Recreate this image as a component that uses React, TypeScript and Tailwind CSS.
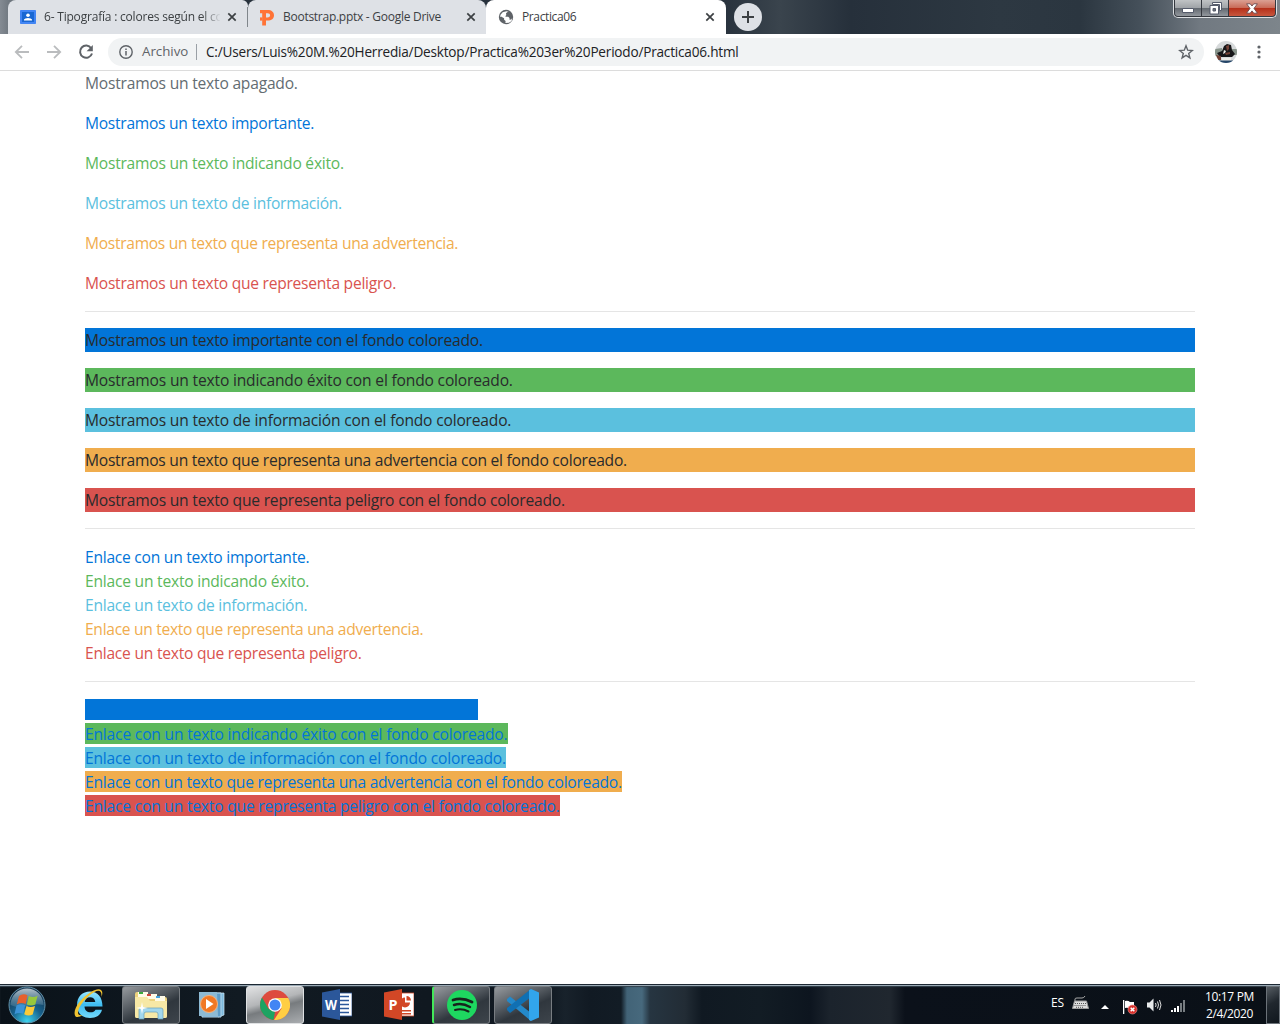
import type { ReactNode } from 'react';

const UI = "font-['Open_Sans','Noto_Sans',sans-serif]";

const paragraphs = [
  { text: 'Mostramos un texto apagado.', style: 'text-[#636c72] tracking-[-0.21px]' },
  { text: 'Mostramos un texto importante.', style: 'text-[#0275d8] tracking-[-0.27px]' },
  { text: 'Mostramos un texto indicando éxito.', style: 'text-[#5cb85c] tracking-[-0.23px]' },
  { text: 'Mostramos un texto de información.', style: 'text-[#5bc0de] tracking-[-0.26px]' },
  { text: 'Mostramos un texto que representa una advertencia.', style: 'text-[#f0ad4e] tracking-[-0.3px]' },
  { text: 'Mostramos un texto que representa peligro.', style: 'text-[#d9534f] tracking-[-0.25px]' },
];

const filled = [
  { text: 'Mostramos un texto importante con el fondo coloreado.', style: 'bg-[#0275d8] tracking-[-0.2px]' },
  { text: 'Mostramos un texto indicando éxito con el fondo coloreado.', style: 'bg-[#5cb85c] tracking-[-0.18px]' },
  { text: 'Mostramos un texto de información con el fondo coloreado.', style: 'bg-[#5bc0de] tracking-[-0.19px]' },
  { text: 'Mostramos un texto que representa una advertencia con el fondo coloreado.', style: 'bg-[#f0ad4e] tracking-[-0.24px]' },
  { text: 'Mostramos un texto que representa peligro con el fondo coloreado.', style: 'bg-[#d9534f] tracking-[-0.2px]' },
];

const links = [
  { text: 'Enlace con un texto importante.', style: 'text-[#0275d8] tracking-[-0.25px]' },
  { text: 'Enlace un texto indicando éxito.', style: 'text-[#5cb85c] tracking-[-0.22px]' },
  { text: 'Enlace un texto de información.', style: 'text-[#5bc0de] tracking-[-0.25px]' },
  { text: 'Enlace un texto que representa una advertencia.', style: 'text-[#f0ad4e] tracking-[-0.3px]' },
  { text: 'Enlace un texto que representa peligro.', style: 'text-[#d9534f] tracking-[-0.24px]' },
];

const filledLinks = [
  { text: 'Enlace con un texto importante con el fondo coloreado.', style: 'bg-[#0275d8] w-[393px] tracking-[-0.2px]' },
  { text: 'Enlace con un texto indicando éxito con el fondo coloreado.', style: 'bg-[#5cb85c] w-[423px] tracking-[-0.18px]' },
  { text: 'Enlace con un texto de información con el fondo coloreado.', style: 'bg-[#5bc0de] w-[421px] tracking-[-0.19px]' },
  { text: 'Enlace con un texto que representa una advertencia con el fondo coloreado.', style: 'bg-[#f0ad4e] w-[537px] tracking-[-0.235px]' },
  { text: 'Enlace con un texto que representa peligro con el fondo coloreado.', style: 'bg-[#d9534f] w-[475px] tracking-[-0.2px]' },
];

function CloseX() {
  return (
    <svg width="10" height="10" viewBox="0 0 10 10" className="shrink-0">
      <path d="M1.3 1.3l7.4 7.4M8.7 1.3L1.3 8.7" stroke="#3c4043" strokeWidth="1.7" />
    </svg>
  );
}

function TabStrip() {
  return (
    <div className="flex h-[34px] items-start bg-[linear-gradient(90deg,#848b93_0px,#6e767e_10px,#27313c_240px,#27313c_720px,#3a444d_780px,#26303b_850px,#2d3842_1000px,#2b3640_1080px,#45505a_1140px,#717981_1200px,#7d858b_1280px)] text-[12px] text-[#3c4043]">
      <div className="ml-2 flex h-[34px] w-[240px] items-center rounded-tl-lg rounded-tr-md bg-[#dee1e6] pl-3">
        <svg width="16" height="16" viewBox="0 0 16 16" className="shrink-0">
          <path fill="#4285f4" d="M0 1.5Q0 1 .8 1h14.4q.8 0 .8.5v12.700q0 .8-.8.8H.8q-.8 0-.8-.8z" />
          <path fill="#1967d2" d="M2 3h12v10H2z" />
          <circle cx="8" cy="6.300" r="1.800" fill="#fff" />
          <path fill="#fff" d="M4 11.500V10.600Q4.800 8.900 8 8.900t4 1.700v.9z" />
        </svg>
        <span className="ml-2 w-[176px] overflow-hidden whitespace-nowrap tracking-[-0.2px] [mask-image:linear-gradient(90deg,#000_158px,transparent_177px)]">
          6- Tipografía : colores según el co
        </span>
        <span className="ml-[7px] flex"><CloseX /></span>
      </div>
      <div className="flex h-[34px] w-[238px] items-center rounded-t-lg bg-[#dee1e6]">
        <span className="-ml-px h-5 w-px shrink-0 bg-[#80868b]" />
        <svg width="14" height="17" viewBox="0 0 14 17" className="ml-3 shrink-0">
          <path fill="#ff7336" fillRule="evenodd" d="M0 1h7.600C11.600 1 14 3 14 6.300s-2.500 5.300-6.400 5.300H6V16.500H2.200V4.200H0zM6 4.200v4.200h1.500c1.700 0 2.600-.7 2.600-2.100s-.9-2.100-2.600-2.100z" />
          <path fill="#ff7336" d="M0 8.400h2.500v3.200H0z" />
        </svg>
        <span className="ml-[9px] w-[183px] whitespace-nowrap tracking-[-0.27px]">Bootstrap.pptx - Google Drive</span>
        <CloseX />
      </div>
      <div className="flex h-[34px] w-[240px] items-center rounded-t-lg bg-white pl-3">
        <svg width="16" height="16" viewBox="0 0 16 16" className="shrink-0">
          <circle cx="8" cy="8" r="7.200" fill="#5f6368" />
          <path fill="#fff" d="M8.500 2.200l2.200.6-1 1.200v1.400L7.800 6.500l-.4 1.300h2.800l1.300 1.300v1.600l1.700-.1 1-1.700-.6 3-2.600 1.800-3.600.4.200-2.200-1.500-1.200V9.200L3 7.600l-1.100.3.8-2.500 2-2.200z" />
          <path fill="#5f6368" d="M8 4.300l2.500-2 3 2.200.8 2.700-2.200 1.100-1.200-1.200-2.500-.3z" />
        </svg>
        <span className="ml-2 w-[183px] whitespace-nowrap tracking-[-0.38px]">Practica06</span>
        <CloseX />
      </div>
      <div className="ml-2 mt-[3px] flex h-7 w-7 items-center justify-center rounded-full bg-[#dee1e6]">
        <svg width="12" height="12" viewBox="0 0 12 12"><path d="M6 0v12M0 6h12" stroke="#3c4043" strokeWidth="2" /></svg>
      </div>
      <div className="ml-auto mr-[3px] flex h-[18px] w-[104px] overflow-hidden rounded-b-[5px] border border-t-0 border-[#dde0e3] bg-[#34383f] p-px pt-0">
        <div className="flex flex-1 items-center justify-center rounded-bl-[3px] bg-[linear-gradient(#c0c3c5_0%,#a0a4a8_48%,#646a71_52%,#92979d_100%)]">
          <svg width="12" height="5" viewBox="0 0 12 5" className="mt-1"><path d="M.5.5h11v4H.5z" fill="#fff" stroke="#555b6b" /></svg>
        </div>
        <div className="ml-px flex w-[26px] items-center justify-center bg-[linear-gradient(#c0c3c5_0%,#a0a4a8_48%,#646a71_52%,#92979d_100%)]">
          <svg width="13" height="13" viewBox="0 0 13 13">
            <path d="M3.500.5h9v8h-2v-6h-7z" fill="#fff" stroke="#555b6b" />
            <path fillRule="evenodd" d="M1 3.500h8.500v8.500H1zM4 6.500v2.500h2.500V6.500z" fill="#fff" stroke="#555b6b" />
          </svg>
        </div>
        <div className="ml-px flex w-[46px] items-center justify-center rounded-br-[3px] bg-[linear-gradient(#dba093_0%,#c96b58_48%,#b5301a_52%,#c8573e_100%)]">
          <svg width="12" height="11" viewBox="0 0 12 11">
            <path d="M.6.8h3.600L6 3 7.800.8h3.600L8 5.400l3.400 4.800H7.800L6 7.900l-1.800 2.300H.6L4 5.400z" fill="#fff" stroke="#6b4a4e" strokeWidth=".9" />
          </svg>
        </div>
      </div>
    </div>
  );
}

function Toolbar() {
  return (
    <div className="flex h-[37px] items-center border-b border-[#dcdcdc] bg-white">
      <svg width="16" height="16" viewBox="0 0 16 16" className="ml-[14px]"><path d="M15 8H2M8 1.800L1.800 8 8 14.200" fill="none" stroke="#babcbe" strokeWidth="1.800" /></svg>
      <svg width="16" height="16" viewBox="0 0 16 16" className="ml-4"><path d="M1 8h13M8 1.800L14.200 8 8 14.200" fill="none" stroke="#babcbe" strokeWidth="1.800" /></svg>
      <svg width="16" height="16" viewBox="0 0 16 16" className="ml-4">
        <path d="M13.200 4.200A6.100 6.100 0 1 0 14 9.500" fill="none" stroke="#5f6368" strokeWidth="2" />
        <path d="M14.800 1v6.200H8.600z" fill="#5f6368" />
      </svg>
      <div className="ml-[14px] flex h-7 w-[1096px] items-center rounded-full bg-[#f1f3f4] pl-[11px] pr-[10px]">
        <svg width="14" height="14" viewBox="0 0 14 14"><circle cx="7" cy="7" r="6.200" fill="none" stroke="#5f6368" strokeWidth="1.400" /><path d="M7 6v4.500M7 3.500V5" stroke="#5f6368" strokeWidth="1.500" /></svg>
        <span className="ml-[9px] w-[46px] whitespace-nowrap text-[13.300px] text-[#5f6368]">Archivo</span>
        <span className="ml-2 h-4 w-px bg-[#9aa0a6]" />
        <span className="ml-[9px] flex-1 whitespace-nowrap text-[13.600px] tracking-[-0.205px] text-[#202124]">
          C:/Users/Luis%20M.%20Herredia/Desktop/Practica%203er%20Periodo/Practica06.html
        </span>
        <svg width="16" height="16" viewBox="0 0 16 16"><path d="M8 1.800l1.700 4.400 4.600.3-3.600 2.900 1.200 4.500L8 11.400l-3.900 2.500 1.200-4.500L1.700 6.500l4.600-.3z" fill="none" stroke="#5f6368" strokeWidth="1.400" /></svg>
      </div>
      <svg width="22" height="22" viewBox="0 0 22 22" className="ml-[11px] rounded-full">
        <path fill="#d7dadb" d="M0 0h22v22H0z" />
        <path fill="#87938a" d="M0 8l7-1v8H0zM17 8h5v6h-5z" />
        <path fill="#171719" d="M2 12l5-2 2-5 3-2 4 1 1 5 3 4-3 3H5z" />
        <path fill="#744236" d="M11 5l3-1v4l-2 2zM10 12l5-1v2l-4 1zM1 14l5 1v4H3z" />
        <path fill="#ecebe7" d="M9 9l2 1-1 2-2 1zM7 17h9v3H7z" />
        <path fill="#244568" d="M3 19.500h15V22H3z" />
      </svg>
      <svg width="4" height="14" viewBox="0 0 4 14" className="ml-[20px]" fill="#5f6368"><circle cx="2" cy="2" r="1.600" /><circle cx="2" cy="7" r="1.600" /><circle cx="2" cy="12" r="1.600" /></svg>
    </div>
  );
}

function Rule() {
  return <hr className="my-4 border-t border-[#e5e5e5]" />;
}

function PageContent() {
  return (
    <main className="mx-auto h-[913px] w-[1110px] whitespace-nowrap text-[15.600px] leading-6 text-[#292b2c]">
      <div className="flex flex-col gap-4">
        {paragraphs.map((p) => <p key={p.text} className={p.style}>{p.text}</p>)}
      </div>
      <Rule />
      <div className="flex flex-col gap-4">
        {filled.map((p) => <p key={p.text} className={p.style}>{p.text}</p>)}
      </div>
      <Rule />
      <div>
        {links.map((p) => <a key={p.text} className={`block ${p.style}`}>{p.text}</a>)}
      </div>
      <Rule />
      <div className="flex flex-col gap-[3px] pt-px">
        {filledLinks.map((p) => <a key={p.text} className={`block h-[21px] leading-[22px] text-[#0275d8] ${p.style}`}>{p.text}</a>)}
      </div>
    </main>
  );
}

function TaskButton({ className, children }: { className: string; children: ReactNode }) {
  return <div className={`flex h-[38px] w-[58px] shrink-0 items-center justify-center rounded-[3px] ${className}`}>{children}</div>;
}

const glass = 'border border-[#787d82] bg-[linear-gradient(155deg,#969a9e_0%,#5c6268_35%,#30373e_60%,#3d444b_100%)]';

function OfficeIcon({ color, letter, children }: { color: string; letter: string; children: ReactNode }) {
  return (
    <svg width="30" height="31" viewBox="0 0 30 31">
      <path d="M17 4h13v23H17z" fill="#fff" stroke={color} strokeWidth=".8" />
      {children}
      <path d="M0 3.500L18 0v31L0 27.500z" fill={color} />
      <text x="9" y="21" textAnchor="middle" fontSize="15" fontWeight="700" fill="#fff" textLength={letter === 'W' ? 12 : 9} lengthAdjust="spacingAndGlyphs">{letter}</text>
    </svg>
  );
}

function Taskbar() {
  return (
    <footer className="flex h-10 items-center border-t border-[#1c2732] bg-[linear-gradient(90deg,#0a1219_0px,#111a22_240px,#101820_430px,#111a23_550px,#18222b_565px,#111a23_590px,#121c25_621px,#426377_627px,#47697d_642px,#263541_650px,#222c35_685px,#101922_702px,#121c24_760px,#0d151f_810px,#1b232c_830px,#20272f_890px,#0b111a_905px,#0a1017_1280px)] shadow-[inset_0_1px_0_#9aa9b4,inset_0_2px_1px_#33424d]">
      <svg width="38" height="38" viewBox="0 0 38 38" className="ml-2">
        <defs>
          <radialGradient id="orb" cx=".5" cy=".95" r=".85"><stop stopColor="#3ed3ee" /><stop offset=".5" stopColor="#17638f" /><stop offset="1" stopColor="#16344e" /></radialGradient>
          <linearGradient id="shine" x2="0" y2="1"><stop stopColor="#d2dde3" stopOpacity=".85" /><stop offset="1" stopColor="#78a5bd" stopOpacity=".25" /></linearGradient>
        </defs>
        <circle cx="19" cy="19" r="18" fill="url(#orb)" stroke="#6292aa" />
        <path d="M2.500 19a16.500 16.500 0 0 1 33 0q-8-2-16 1T2.500 19z" fill="url(#shine)" />
        <path d="M11 10q4-3 8.500-.8L17.600 18q-4-2-8.800.2z" fill="#e7602d" />
        <path d="M20.800 10q4.200 2.200 8.800-.2L27.300 18.500q-4 2.200-8.500 0z" fill="#98c83c" />
        <path d="M8.500 19.600q4.200-2.400 8.700-.3l-2 8.500q-4.200-2-8.700.4z" fill="#3b93d7" />
        <path d="M18.500 20q4 2.200 8.500 0l-2.300 8.500q-4.200 2.200-8.500-.2z" fill="#fcca38" />
      </svg>
      <svg width="32" height="32" viewBox="0 0 32 32" className="-mt-0.5 ml-[27px]">
        <defs><linearGradient id="ie" x2="0" y2="1"><stop stopColor="#9ae8ff" /><stop offset=".5" stopColor="#3ebcf1" /><stop offset="1" stopColor="#74d9fb" /></linearGradient></defs>
        <path fillRule="evenodd" fill="url(#ie)" d="M4 17C4 8.500 9.500 3.500 17 3.500S29.500 9 29.500 18.500H11.500c.2 3.800 2.400 5.800 6 5.800 2.500 0 4-.8 5-2.600h6.500C27.500 27 23.500 30 17 30 9 30 4 25 4 17zm7.700-3h10.600c-.4-3.200-2.200-4.800-5.200-4.800-3 0-4.900 1.700-5.400 4.800z" />
        <path d="M28.500 9C31.500 1 26-1 18 4 8 10-.5 21 2 27.500c1 2.500 4.500 1.500 8-.5-3.500.8-5 0-5-2.500C5 18.500 14 8 21.500 4c4.500-2.300 7.500-1.500 7 5z" fill="#f0c331" />
      </svg>
      <TaskButton className={`ml-[17px] ${glass}`}>
        <svg width="34" height="30" viewBox="0 0 34 30">
          <path d="M1 4q0-2 2-2h10l1 2h8l1 3h8q2 0 2 2v17q0 2-2 2H3q-2 0-2-2z" fill="#ecd17c" />
          <path d="M4 2h10v6H4zM12 4h11v5H12zM21 6h10v6H21z" fill="#fffbe8" />
          <path d="M5 2h4v2H5z" fill="#3daa3d" /><path d="M13 4h4v2h-4z" fill="#ce453a" /><path d="M22 6h4v2h-4z" fill="#45a4df" />
          <path d="M1 7h12l3 4h17v15q0 2-2 2H3q-2 0-2-2z" fill="#f7e8a6" />
          <path d="M5 29v-9q0-2 2-2h20q2 0 2 2v9h-5v-5q0-2-2-2H12q-2 0-2 2v5z" fill="#a2d7ed" stroke="#649fbc" strokeWidth=".7" />
          <path d="M8 12l1 5 5 1-5 1-1 5-1-5-5-1 5-1z" fill="#fff" />
        </svg>
      </TaskButton>
      <svg width="27" height="27" viewBox="0 0 27 27" className="ml-[18px]">
        <path d="M9 2h17v22l-6 2z" fill="#7eb9dc" stroke="#d2eaf6" strokeWidth=".7" /><path d="M4 2h19v24H4z" fill="#5e9cc7" stroke="#b3d5e9" />
        <path d="M1 1h18l1 24H1z" fill="#8dbad4" />
        <circle cx="11" cy="13" r="8.500" fill="#f17824" stroke="#f7b17a" /><path d="M8 8l7.500 5L8 18z" fill="#fff" />
      </svg>
      <TaskButton className="ml-[21px] border border-[#dfe1e3] bg-[linear-gradient(165deg,#e1e2e3_0%,#b4b6b8_40%,#777b7e_56%,#aaadb0_100%)]">
        <svg width="30" height="30" viewBox="0 0 30 30">
          <circle cx="15" cy="15" r="15" fill="#dd4b3e" />
          <path d="M2.010 7.500L8.500 18.750 15 22 13.500 29.900A15 15 0 0 1 2.010 7.500z" fill="#1da362" />
          <path d="M15 8h13.260A15 15 0 0 1 14 30l7.500-11.500z" fill="#ffce44" />
          <circle cx="15" cy="15" r="6.800" fill="#fff" /><circle cx="15" cy="15" r="5.500" fill="#4285f4" />
        </svg>
      </TaskButton>
      <div className="-mt-px ml-[18px]"><OfficeIcon color="#2b579a" letter="W"><path d="M18 7.500h9M18 11.500h9M18 15.500h9M18 19.500h9M18 23.500h9" stroke="#2b579a" strokeWidth="1.500" /></OfficeIcon></div>
      <div className="-mt-px ml-8"><OfficeIcon color="#d24726" letter="P"><path d="M21 8.500a5 5 0 1 0 5 5h-5zM22.500 7v4.500H27A4.500 4.500 0 0 0 22.500 7zM18 21h9v1.500h-9zM18 24h9v1.500h-9z" fill="#d24726" /></OfficeIcon></div>
      <TaskButton className={`ml-[18px] border-l-2 border-l-[#43e759] ${glass}`}>
        <svg width="30" height="30" viewBox="0 0 30 30"><circle cx="15" cy="15" r="15" fill="#1ed760" /><g fill="none" stroke="#17231c" strokeLinecap="round"><path d="M6 10q9-3 19 2" strokeWidth="2.800" /><path d="M7 15q8-2.500 16 2" strokeWidth="2.500" /><path d="M8 20q7-2 13.500 1.500" strokeWidth="2" /></g></svg>
      </TaskButton>
      <TaskButton className={`ml-1 ${glass}`}>
        <svg width="32" height="32" viewBox="0 0 32 32">
          <path d="M0 10l3-2.500L24 24v8L0 12z" fill="#2489ca" /><path d="M0 21l3 3L24 8V0L0 19z" fill="#1070b3" /><path d="M24 0l8 3.500v25L24 32l-2-1V1z" fill="#32a5ec" />
        </svg>
      </TaskButton>
      <div className="ml-auto flex items-center text-[12px] text-white">
        <span className="-mt-1 w-[15px] tracking-[-0.1px]">ES</span>
        <svg width="17" height="16" viewBox="0 0 17 16" className="-mt-1 ml-[6px]"><path d="M3 6V4q0-1 2-1h5q2 0 3-2" fill="none" stroke="#aaa" /><path d="M2.500 6h12l2 7.500h-16z" fill="#ddd" stroke="#999" /><path d="M3 8.500h11M2.500 10.500h12M4 12.300h8" stroke="#555" strokeDasharray="1 1" /></svg>
        <svg width="8" height="4" viewBox="0 0 8 4" className="ml-3 mt-1"><path d="M4 0l4 4H0z" fill="#fff" /></svg>
        <svg width="16" height="16" viewBox="0 0 16 16" className="ml-[13px] mt-1"><path d="M1 1h1.300v14H1zM3 2q3-1 5 1h4v7H8q-2-2-5-1z" fill="#fff" /><circle cx="10.500" cy="10.500" r="4.500" fill="#d9302c" stroke="#ef8e89" strokeWidth=".6" /><path d="M8.700 8.700l3.600 3.600m0-3.600l-3.600 3.600" stroke="#fff" strokeWidth="1.500" /></svg>
        <svg width="16" height="16" viewBox="0 0 16 16" className="ml-2 mt-px"><path d="M1 5.500h2.500l4-4v13l-4-4H1z" fill="#e8eaeb" /><path d="M9.500 6q1.200 2 0 4M11.500 4.500q2 3.500 0 7M13.500 3q3 5 0 10" fill="none" stroke="#ddd" /></svg>
        <svg width="15" height="12" viewBox="0 0 15 12" className="ml-[9px] mt-0.5"><path d="M0 10h2v2H0zM3 8h2v4H3zM6 6h2v6H6z" fill="#fff" /><path d="M9 3h2v9H9zM12 0h2v12h-2z" fill="#777d81" /></svg>
        <div className="ml-[17px] w-[53px] whitespace-nowrap text-center text-[12px] leading-[17px]">
          <div className="-mx-1 tracking-[-0.35px]">10:17 PM</div><div className="-mx-1 tracking-[-0.35px]">2/4/2020</div>
        </div>
        <div className="ml-[10px] mt-px h-[38px] w-[14px] border border-[#6b7279] bg-[linear-gradient(150deg,#565d63,#20272e_45%,#10171e)]" />
      </div>
    </footer>
  );
}

export default function App() {
  return (
    <div className={`flex h-[1024px] w-[1280px] flex-col overflow-hidden bg-white ${UI}`}>
      <TabStrip />
      <Toolbar />
      <PageContent />
      <Taskbar />
    </div>
  );
}
